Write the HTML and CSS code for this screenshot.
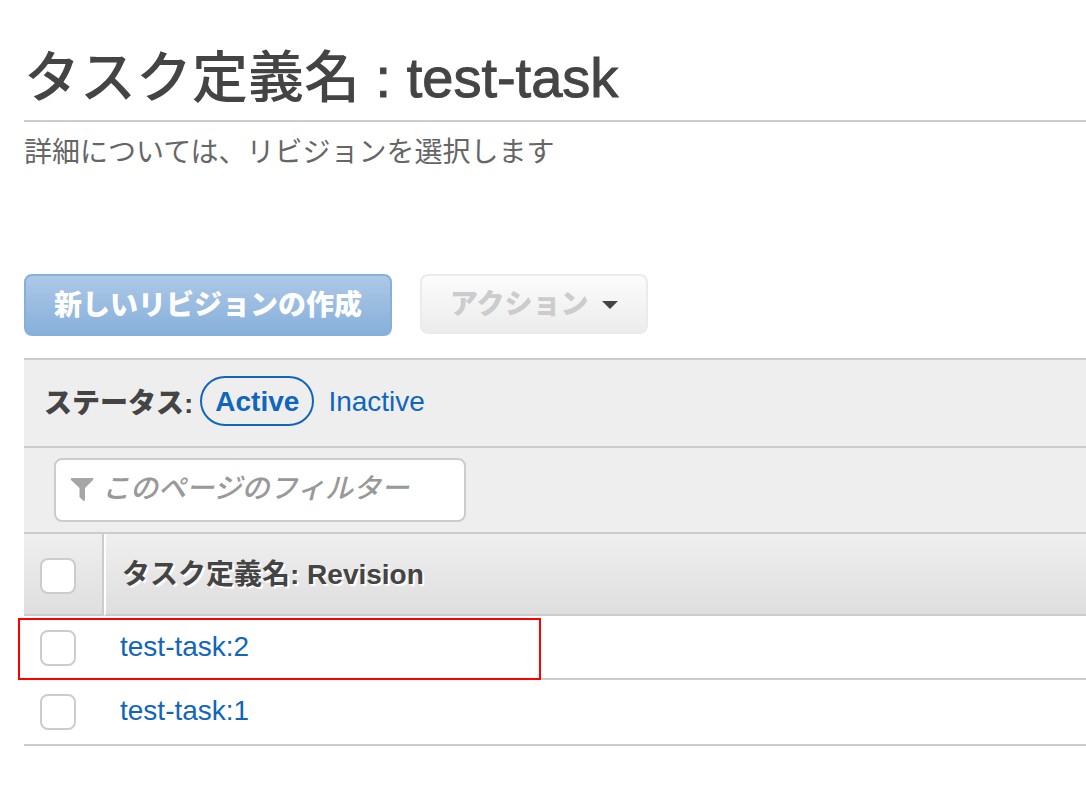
FILE: index.html
```html
<!DOCTYPE html>
<html lang="ja">
<head>
<meta charset="utf-8">
<title>タスク定義名 : test-task</title>
<link rel="stylesheet" href="styles.css">
</head>
<body>
<main class="page">
  <h1 class="title">タスク定義名 <span class="title-name">: test-task</span></h1>
  <p class="lead">詳細については、リビジョンを選択します</p>
  <div class="toolbar">
    <button class="btn btn-primary" type="button" disabled>新しいリビジョンの作成</button>
    <button class="btn btn-menu" type="button" disabled>アクション<svg class="caret" width="16" height="8" viewBox="0 0 16 8" aria-hidden="true"><path d="M0 0h16L8 8z"/></svg></button>
  </div>
  <section class="panel">
    <nav class="status">
      <span class="status-label">ステータス:</span>
      <a class="status-link current" href="#">Active</a>
      <a class="status-link" href="#">Inactive</a>
    </nav>
    <div class="filter">
      <label class="filter-box">
        <svg class="funnel" width="24" height="24" viewBox="0 0 24 24" aria-hidden="true"><path d="M1.500 0h21q1.500.5.5 2l-8 8v12q-.5 1.500-2 .5l-3.500-3.500v-9L1 2Q0 .5 1.500 0z"/></svg>
        <input class="filter-input" type="text" placeholder="このページのフィルター" aria-label="このページのフィルター">
      </label>
    </div>
    <table class="revisions">
      <thead>
        <tr>
          <th class="pick"><input class="check" type="checkbox" aria-label="すべて選択"></th>
          <th class="name">タスク定義名: Revision</th>
        </tr>
      </thead>
      <tbody>
        <tr class="marked">
          <td class="pick"><input class="check" type="checkbox" aria-label="test-task:2"></td>
          <td class="name"><a class="link" href="#">test-task:2</a></td>
        </tr>
        <tr>
          <td class="pick"><input class="check" type="checkbox" aria-label="test-task:1"></td>
          <td class="name"><a class="link" href="#">test-task:1</a></td>
        </tr>
      </tbody>
    </table>
  </section>
</main>
</body>
</html>
```
FILE: styles.css
```css
*, ::after { box-sizing: border-box; }
body {
  margin: 0;
  background: #fff;
  color: #444;
  font: 28px/32px "Liberation Sans", "Noto Sans CJK JP", sans-serif;
}
.page { padding: 36px 0 40px 24px; }
.title {
  margin: 0;
  padding: 10px 0;
  border-bottom: 2px solid #ccc;
  font-size: 56px;
  line-height: 64px;
  font-weight: 500;
}
.title-name { -webkit-text-stroke: 1px #444; }
.lead { margin: 0; padding-top: 15px; color: #666; }
.toolbar {
  display: flex;
  align-items: flex-start;
  gap: 28px;
  padding: 105px 0 22px;
}
.btn {
  display: flex;
  align-items: center;
  gap: 13px;
  padding: 2px 28px 0;
  height: 60px;
  border: 2px solid #ebebeb;
  border-radius: 8px;
  font: inherit;
  font-weight: 900;
}
.btn-primary {
  height: 62px;
  border-color: #85b0de;
  background: linear-gradient(#adc8e7, #87b0db);
  color: #fff;
}
.btn-menu { background: linear-gradient(#fcfcfc, #ececec); color: #ccc; }
.caret { fill: #444; }
.panel { border-top: 2px solid #ccc; background: #eee; }
.status {
  display: flex;
  align-items: center;
  gap: 14px;
  padding: 16px 20px 20px;
  border-bottom: 2px solid #ccc;
}
.status-label { margin-right: -7px; padding-top: 6px; font-weight: 900; }
.status-link { padding-top: 2px; color: #1166bb; text-decoration: none; }
.current {
  padding: 8px 13px 6px;
  border: 2px solid #1166bb;
  border-radius: 25px;
  font-weight: 700;
}
.filter { padding: 10px 30px; }
.filter-box {
  display: flex;
  align-items: center;
  gap: 8px;
  width: 412px;
  height: 64px;
  padding: 0 14px;
  border: 2px solid #ccc;
  border-radius: 8px;
  background: #fff;
}
.funnel { flex: none; fill: #a6a6a6; }
.filter-input {
  flex: 1;
  min-width: 0;
  padding: 0 0 2px;
  border: 0;
  outline: 0;
  background: none;
  font: inherit;
  font-style: italic;
  font-weight: 500;
}
.filter-input::placeholder { color: #999; }
.revisions {
  width: 100%;
  border-spacing: 0;
  border-top: 2px solid #ccc;
  background: #fff;
}
.revisions thead tr { background: linear-gradient(#efefef, #dedede); }
th, td { padding: 0; border-bottom: 2px solid #ccc; text-align: left; vertical-align: top; }
th { height: 82px; text-shadow: 2px 2px 0 #fff; }
td { height: 66px; }
.marked td { height: 64px; }
.pick { width: 80px; padding: 14px 0 0 16px; }
th.pick { border-right: 2px solid #ccc; padding-top: 24px; }
th.name { padding: 25px 0 0 16px; border-left: 2px solid #fff; }
td.name { padding: 15px 0 0 16px; }
.check {
  display: block;
  appearance: none;
  width: 36px;
  height: 36px;
  margin: 0;
  border: 2px solid #ccc;
  border-radius: 8px;
  background: #fff;
}
.link { color: #1166bb; text-decoration: none; }
.marked { position: relative; }
.marked::after {
  content: "";
  position: absolute;
  left: -6px;
  top: 2px;
  bottom: 0;
  width: 523px;
  border: 2px solid #f00;
}
```
